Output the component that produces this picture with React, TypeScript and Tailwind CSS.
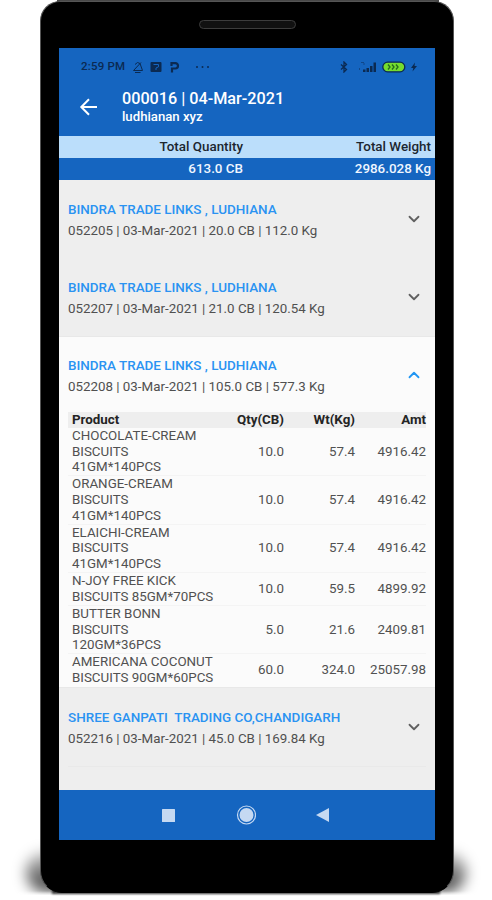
import { ChevronDown, ChevronUp } from "lucide-react";
import clsx from "clsx";

type Product = { lines: string[]; qty: string; wt: string; amt: string };

type Order = { party: string; summary: string };

const products: Product[] = [
  { lines: ["CHOCOLATE-CREAM", "BISCUITS", "41GM*140PCS"], qty: "10.0", wt: "57.4", amt: "4916.42" },
  { lines: ["ORANGE-CREAM", "BISCUITS", "41GM*140PCS"], qty: "10.0", wt: "57.4", amt: "4916.42" },
  { lines: ["ELAICHI-CREAM", "BISCUITS", "41GM*140PCS"], qty: "10.0", wt: "57.4", amt: "4916.42" },
  { lines: ["N-JOY FREE KICK", "BISCUITS 85GM*70PCS"], qty: "10.0", wt: "59.5", amt: "4899.92" },
  { lines: ["BUTTER BONN", "BISCUITS", "120GM*36PCS"], qty: "5.0", wt: "21.6", amt: "2409.81" },
  { lines: ["AMERICANA COCONUT", "BISCUITS 90GM*60PCS"], qty: "60.0", wt: "324.0", amt: "25057.98" },
];

const orders: Order[] = [
  { party: "BINDRA TRADE LINKS , LUDHIANA", summary: "052205 | 03-Mar-2021 | 20.0 CB | 112.0 Kg" },
  { party: "BINDRA TRADE LINKS , LUDHIANA", summary: "052207 | 03-Mar-2021 | 21.0 CB | 120.54 Kg" },
  { party: "BINDRA TRADE LINKS , LUDHIANA", summary: "052208 | 03-Mar-2021 | 105.0 CB | 577.3 Kg" },
  { party: "SHREE GANPATI  TRADING CO,CHANDIGARH", summary: "052216 | 03-Mar-2021 | 45.0 CB | 169.84 Kg" },
];

function StatusBar() {
  return (
    <div className="flex h-[38px] items-center pl-[22px] pr-[17px] text-[#0b2a52]">
      <span className="w-[46px] whitespace-nowrap text-[11.5px] font-medium tracking-[0.2px]">2:59 PM</span>
      <svg className="ml-[5px] h-3 w-3" viewBox="0 0 12 12" fill="none" stroke="currentColor" strokeWidth="1">
        <path d="M3 3.500 5.500 1.500l2.500 1L10.500 9.500H1.500L9 1.500M3 11.500h5.500" />
      </svg>
      <svg className="ml-[6px] h-3 w-3" viewBox="0 0 12 12">
        <rect x="0.500" y="1" width="11" height="10" rx="1" fill="currentColor" />
        <path d="M3.500 3.500h5v2.300L6 7v2" stroke="#1565c0" fill="none" />
      </svg>
      <svg className="ml-[7px] h-3 w-3" viewBox="0 0 12 12" fill="none" stroke="currentColor" strokeWidth="2.200">
        <path d="M3 11.500V7.500H6.300a2.700 2.700 0 0 0 0-5.400H2.500V5" />
      </svg>
      <svg className="ml-[14px] h-1 w-4" viewBox="0 0 16 4" fill="currentColor">
        <circle cx="2" cy="2" r="1" />
        <circle cx="7.500" cy="2" r="1" />
        <circle cx="13" cy="2" r="1" />
      </svg>
      <svg className="ml-auto h-3 w-2" viewBox="0 0 8 12" fill="none" stroke="currentColor" strokeWidth="1.300">
        <path d="m1 3.500 5.500 5L4 11V1l2.500 2.500-5.500 5" />
      </svg>
      <svg className="ml-[10px] h-3 w-5" viewBox="0 0 20 12" fill="currentColor">
        <path d="M5 8.500h2.500V11H5zM8.500 7H11v4H8.500zM12 5h2.500v6H12zM15.500 1.500H18V11h-2.500z" />
        <path d="M3 1h3v1H3zM5 2.500h2v1H5zM1 7h1v2H1z" opacity=".5" />
      </svg>
      <svg className="ml-[4px] h-3 w-6" viewBox="0 0 24 12">
        <rect x="0.800" y="1.200" width="22" height="9.600" rx="4.800" fill="#75dc2e" stroke="#0b2a52" strokeWidth="1.300" />
        <path d="m6 3.500 2 2.500-2 2.500m4-5 2 2.500-2 2.500m4-5 2 2.500-2 2.500" stroke="#24691e" strokeWidth="1.300" fill="none" />
      </svg>
      <svg className="ml-[4px] h-3 w-2" viewBox="0 0 8 12" fill="currentColor">
        <path d="M5 1.500 1 7h2.300L2.500 10.500 7 5H4.500z" />
      </svg>
    </div>
  );
}

function AppBar() {
  return (
    <div className="flex h-[50px] text-white">
      <svg className="ml-5 mt-[11px] h-5 w-5" viewBox="0 0 20 20" fill="none" stroke="currentColor" strokeWidth="2">
        <path d="M18 10H2.500M10 2.300 2.300 10l7.700 7.700" />
      </svg>
      <div className="ml-[23px] pt-1 font-medium">
        <h1 className="text-[16.200px] leading-[18px]">000016 | 04-Mar-2021</h1>
        <p className="text-[13.200px] leading-[18px]">ludhianan xyz</p>
      </div>
    </div>
  );
}

function Totals() {
  return (
    <div className="text-right text-[13.400px] font-medium">
      <div className="flex h-[22px] items-center bg-[#bbdefb] pr-1 text-[#1c2630]">
        <span className="w-[184px]">Total Quantity</span>
        <span className="flex-1">Total Weight</span>
      </div>
      <div className="flex h-[22px] items-center bg-[#1565c0] pr-1 text-[#f0f6ff]">
        <span className="w-[184px]">613.0 CB</span>
        <span className="flex-1">2986.028 Kg</span>
      </div>
    </div>
  );
}

function OrderHeader({ order, open }: { order: Order; open?: boolean }) {
  const Chevron = open ? ChevronUp : ChevronDown;
  return (
    <div className={clsx("flex items-center justify-between pl-[9px] pr-3", open ? "h-[75px]" : "h-[78px]")}>
      <div className={clsx("whitespace-pre", open ? "pt-[3px]" : "pt-[2px]")}>
        <h2 className="text-[13.450px] font-medium leading-[21px] text-[#2a93f2]">{order.party}</h2>
        <p className="text-[13.350px] leading-[21px] text-[#505050]">{order.summary}</p>
      </div>
      <Chevron className={clsx("h-[18px] w-[18px]", open ? "text-[#2196f3]" : "text-[#606060]")} strokeWidth={2.4} />
    </div>
  );
}

function ProductTable() {
  return (
    <div className="mx-[9px] text-[13.350px] leading-[15.600px] text-[#515151]">
      <div className="flex h-4 bg-[#eeeeee] pl-1 text-right font-bold text-[#242424]">
        <span className="w-[143px] text-left">Product</span>
        <span className="w-[69px]">Qty(CB)</span>
        <span className="w-[71px]">Wt(Kg)</span>
        <span className="w-[71px]">Amt</span>
      </div>
      {products.map((p) => (
        <div
          key={p.lines.join(" ")}
          className="flex items-center border-b border-[#f4f4f4] pb-[0.600px] pl-1 text-right last:border-b-0"
        >
          <div className="w-[143px] whitespace-nowrap text-left">
            {p.lines.map((line) => (
              <div key={line}>{line}</div>
            ))}
          </div>
          <span className="w-[69px]">{p.qty}</span>
          <span className="w-[71px]">{p.wt}</span>
          <span className="w-[71px]">{p.amt}</span>
        </div>
      ))}
    </div>
  );
}

function NavBar() {
  return (
    <div className="flex h-[50px] items-center bg-[#1565c0] text-[#c5d9f2]">
      <svg className="ml-[103px] h-[13px] w-[13px]" viewBox="0 0 13 13">
        <rect width="13" height="13" rx="0.500" fill="currentColor" />
      </svg>
      <svg className="ml-[61px] h-5 w-5" viewBox="0 0 20 20">
        <circle cx="10.500" cy="10" r="9" fill="none" stroke="currentColor" strokeWidth="1.200" />
        <circle cx="10.500" cy="10" r="7" fill="currentColor" />
      </svg>
      <svg className="ml-[60px] h-[14px] w-[13px]" viewBox="0 0 13 14">
        <path d="M13 0v14L0 7z" fill="currentColor" />
      </svg>
    </div>
  );
}

export default function App() {
  return (
    <div className="relative h-[900px] w-[492px] overflow-hidden bg-white font-[Roboto,sans-serif]">
      {/* soft shadow on the floor either side of the handset */}
      <div className="absolute left-[26px] top-[852px] h-[40px] w-[440px] rounded-[20px] bg-linear-to-b from-black/20 to-black/80 blur-[7px]" />
      <div className="absolute inset-x-0 bottom-0 h-[9px] bg-linear-to-b from-transparent to-white to-50%" />
      <div className="absolute left-[52px] top-[889px] h-[5px] w-[388px] bg-black/70 blur-[1px]" />
      <div className="absolute left-[57px] top-0 h-3 w-[382px] bg-[#484848]" />
      <div className="relative ml-10 h-[893px] w-[414px] pt-px">
        <div className="h-[892px] rounded-t-[20px] rounded-b-[22px] border border-b-black border-[#555555] bg-black px-[18px]">
          <div className="flex h-[46px] justify-center pt-[18px]">
            <div className="h-[9px] w-[97px] rounded-full border border-[#3d3d3d] bg-[#111111]" />
          </div>
          <div className="flex h-[792px] flex-col bg-[#eeeeee]">
            <div className="bg-[#1565c0]">
              <StatusBar />
              <AppBar />
            </div>
            <Totals />
            <div className="flex-1">
              <OrderHeader order={orders[0]} />
              <OrderHeader order={orders[1]} />
              <div className="h-[352px] border-y border-[#e8e8e8] bg-[#fbfbfb]">
                <OrderHeader order={orders[2]} open />
                <ProductTable />
              </div>
              <OrderHeader order={orders[3]} />
              <div className="mx-[9px] border-t border-[#e9e9e9]" />
            </div>
            <NavBar />
          </div>
        </div>
      </div>
    </div>
  );
}
